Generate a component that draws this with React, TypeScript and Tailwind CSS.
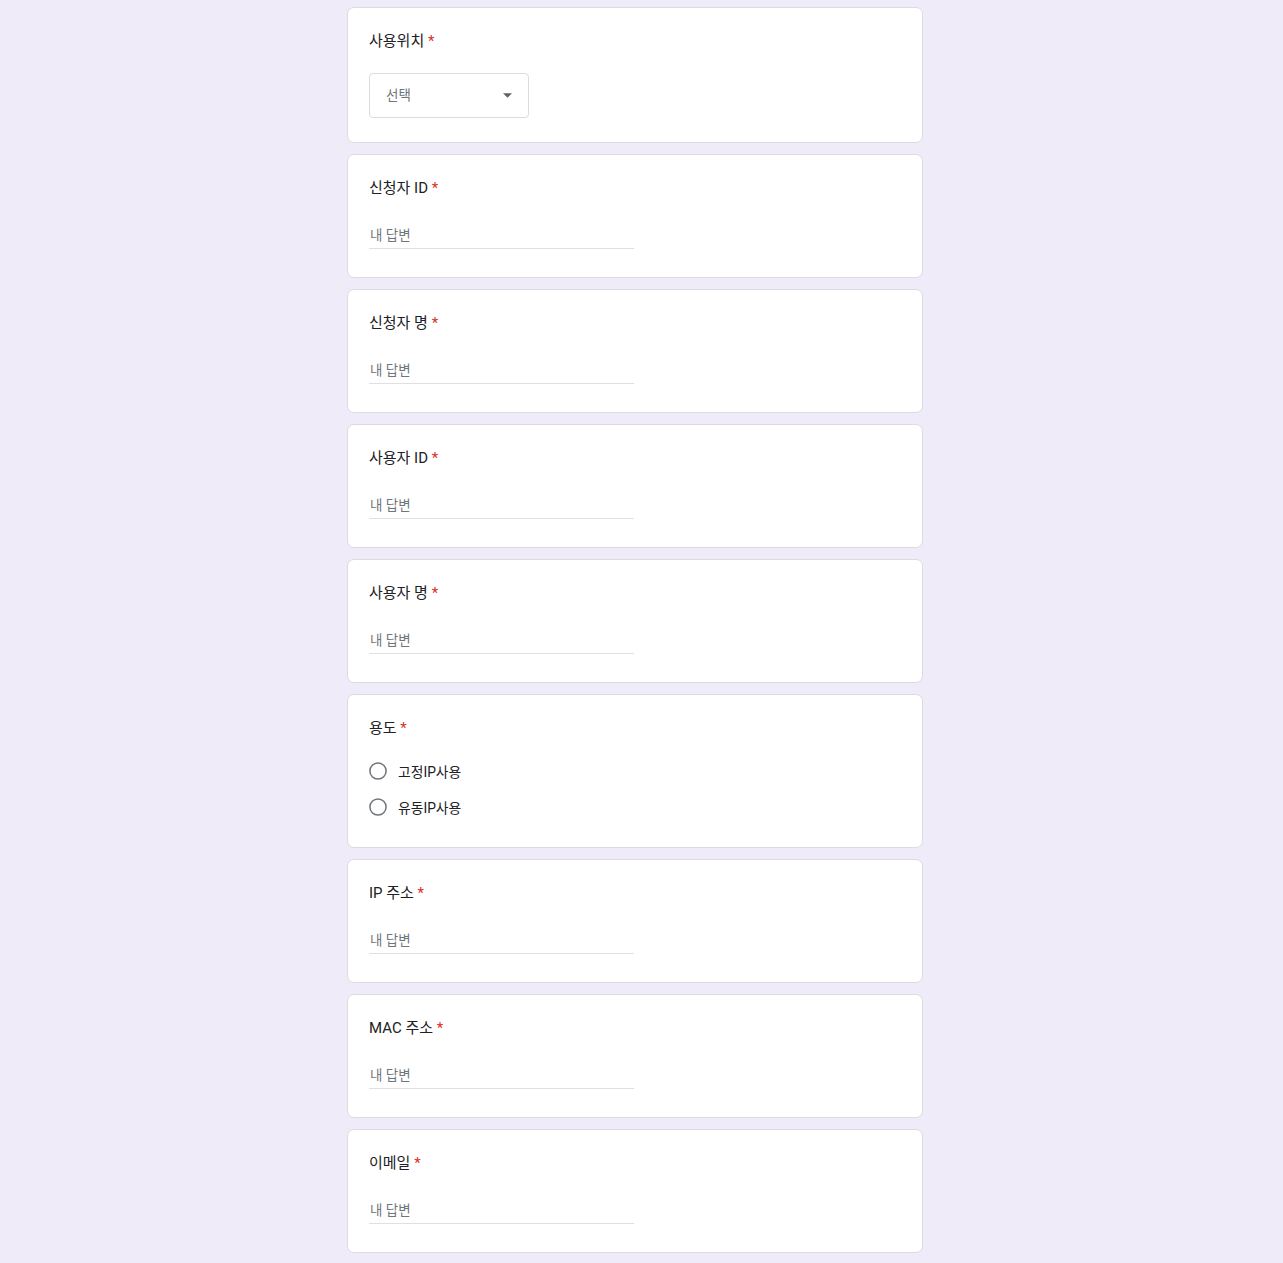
import React from 'react';

const font = { fontFamily: 'Roboto, "Noto Sans CJK KR", Arial, sans-serif' };

const Title = ({ label }: { label: string }) => (
  <div className="pt-[1px] text-[15px] leading-[22px] text-[#202124]">
    {label}
    <span className="text-[#d93025]"> *</span>
  </div>
);

const Card = ({ children, className = '' }: { children: React.ReactNode; className?: string }) => (
  <div className={`w-[576px] rounded-[7px] border border-[#dadce0] bg-white px-[21px] pt-[21px] ${className}`}>
    {children}
  </div>
);

const TextQuestion = ({ label }: { label: string }) => (
  <Card className="pb-[28px]">
    <Title label={label} />
    <div className="mt-[23px] flex h-[27px] w-[265px] items-center border-b border-[#e0e0e0] pt-[2px]">
      <span className="pl-[1px] text-[13.5px] leading-none text-[#70757a]">내 답변</span>
    </div>
  </Card>
);

const Radio = ({ label }: { label: string }) => (
  <div className="flex h-[36px] items-center">
    <svg width="18" height="18" viewBox="0 0 18 18" className="shrink-0">
      <circle cx="9" cy="9" r="8.1" fill="none" stroke="#70757a" strokeWidth="1.5" />
    </svg>
    <span className="ml-[11px] pt-[2px] text-[13.8px] text-[#202124]">{label}</span>
  </div>
);

const App = () => (
  <div style={font} className="min-h-[1263px] bg-[#f0ebf8]">
    <div className="flex flex-col items-center gap-[11px] pr-[13px] pt-[7px] pb-[12px]">
      <Card className="pb-[24px]">
        <Title label="사용위치" />
        <div className="mt-[21px] flex h-[45px] w-[160px] items-center justify-between rounded-[4px] border border-[#dadce0] pl-[16px] pr-[16px]">
          <span className="text-[13.5px] text-[#70757a]">선택</span>
          <svg width="9" height="5" viewBox="0 0 10 5">
            <path d="M0 0l5 5 5-5z" fill="#5f6368" />
          </svg>
        </div>
      </Card>
      <TextQuestion label="신청자 ID" />
      <TextQuestion label="신청자 명" />
      <TextQuestion label="사용자 ID" />
      <TextQuestion label="사용자 명" />
      <Card className="pb-[22px]">
        <Title label="용도" />
        <div className="mt-[14px]">
          <Radio label="고정IP사용" />
          <Radio label="유동IP사용" />
        </div>
      </Card>
      <TextQuestion label="IP 주소" />
      <TextQuestion label="MAC 주소" />
      <TextQuestion label="이메일" />
    </div>
  </div>
);

export default App;
